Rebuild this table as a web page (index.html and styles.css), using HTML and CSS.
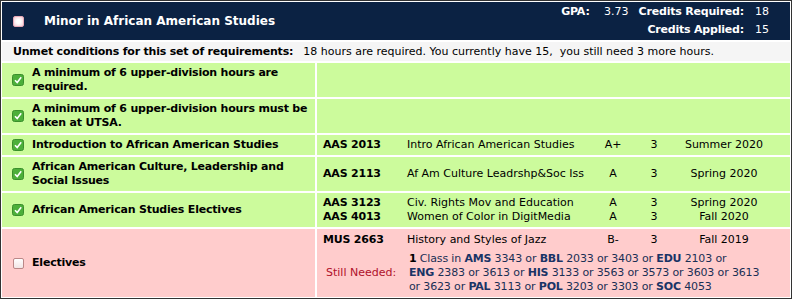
FILE: index.html
```html
<!DOCTYPE html>
<html>
<head>
<meta charset="utf-8">
<link rel="stylesheet" href="styles.css">
</head>
<body>
<div class="block">
  <div class="header">
    <div class="head-left">
      <span class="box box-head"></span>
      <span class="head-title">Minor in African American Studies</span>
    </div>
    <div class="head-right">
      <div class="stat-line">
        <span class="lbl">GPA:</span><span class="val gpa">3.73</span>
        <span class="lbl">Credits Required:</span><span class="val">18</span>
      </div>
      <div class="stat-line">
        <span class="lbl">Credits Applied:</span><span class="val">15</span>
      </div>
    </div>
  </div>

  <div class="unmet">
    <span class="unmet-lbl">Unmet conditions for this set of requirements:</span>
    <span class="unmet-txt">18 hours are required. You currently have 15,&nbsp; you still need 3 more hours.</span>
  </div>

  <div class="req ok">
    <div class="req-left">
      <svg class="chk" viewBox="0 0 12 12"><rect x="0.5" y="0.5" width="11" height="11" rx="2" fill="#4caf3a" stroke="#3a8f2c"/><path d="M3 6.2 L5.2 8.6 L9.2 3.2" fill="none" stroke="#fff" stroke-width="1.6"/></svg>
      <span class="req-name">A minimum of 6 upper-division hours are required.</span>
    </div>
    <div class="req-right"></div>
  </div>

  <div class="req ok">
    <div class="req-left">
      <svg class="chk" viewBox="0 0 12 12"><rect x="0.5" y="0.5" width="11" height="11" rx="2" fill="#4caf3a" stroke="#3a8f2c"/><path d="M3 6.2 L5.2 8.6 L9.2 3.2" fill="none" stroke="#fff" stroke-width="1.6"/></svg>
      <span class="req-name">A minimum of 6 upper-division hours must be taken at UTSA.</span>
    </div>
    <div class="req-right"></div>
  </div>

  <div class="req ok">
    <div class="req-left">
      <svg class="chk" viewBox="0 0 12 12"><rect x="0.5" y="0.5" width="11" height="11" rx="2" fill="#4caf3a" stroke="#3a8f2c"/><path d="M3 6.2 L5.2 8.6 L9.2 3.2" fill="none" stroke="#fff" stroke-width="1.6"/></svg>
      <span class="req-name">Introduction to African American Studies</span>
    </div>
    <div class="req-right">
      <div class="course"><span class="code">AAS 2013</span><span class="title">Intro African American Studies</span><span class="grade">A+</span><span class="cred">3</span><span class="term">Summer 2020</span></div>
    </div>
  </div>

  <div class="req ok">
    <div class="req-left">
      <svg class="chk" viewBox="0 0 12 12"><rect x="0.5" y="0.5" width="11" height="11" rx="2" fill="#4caf3a" stroke="#3a8f2c"/><path d="M3 6.2 L5.2 8.6 L9.2 3.2" fill="none" stroke="#fff" stroke-width="1.6"/></svg>
      <span class="req-name">African American Culture, Leadership and Social Issues</span>
    </div>
    <div class="req-right">
      <div class="course"><span class="code">AAS 2113</span><span class="title">Af Am Culture Leadrshp&amp;Soc Iss</span><span class="grade">A</span><span class="cred">3</span><span class="term">Spring 2020</span></div>
    </div>
  </div>

  <div class="req ok">
    <div class="req-left">
      <svg class="chk" viewBox="0 0 12 12"><rect x="0.5" y="0.5" width="11" height="11" rx="2" fill="#4caf3a" stroke="#3a8f2c"/><path d="M3 6.2 L5.2 8.6 L9.2 3.2" fill="none" stroke="#fff" stroke-width="1.6"/></svg>
      <span class="req-name">African American Studies Electives</span>
    </div>
    <div class="req-right">
      <div class="course"><span class="code">AAS 3123</span><span class="title">Civ. Rights Mov and Education</span><span class="grade">A</span><span class="cred">3</span><span class="term">Spring 2020</span></div>
      <div class="course"><span class="code">AAS 4013</span><span class="title">Women of Color in DigitMedia</span><span class="grade">A</span><span class="cred">3</span><span class="term">Fall 2020</span></div>
    </div>
  </div>

  <div class="req bad last">
    <div class="req-left">
      <span class="box box-row"></span>
      <span class="req-name">Electives</span>
    </div>
    <div class="req-right">
      <div class="course"><span class="code">MUS 2663</span><span class="title">History and Styles of Jazz</span><span class="grade">B-</span><span class="cred">3</span><span class="term">Fall 2019</span></div>
      <div class="needed">
        <span class="need-lbl">Still Needed:</span>
        <span class="need-txt"><b>1</b> Class in <b class="sub">AMS</b> <span class="num">3343</span> or <b class="sub">BBL</b> <span class="num">2033</span> or <span class="num">3403</span> or <b class="sub">EDU</b> <span class="num">2103</span> or<br><b class="sub">ENG</b> <span class="num">2383</span> or <span class="num">3613</span> or <b class="sub">HIS</b> <span class="num">3133</span> or <span class="num">3563</span> or <span class="num">3573</span> or <span class="num">3603</span> or <span class="num">3613</span><br>or <span class="num">3623</span> or <b class="sub">PAL</b> <span class="num">3113</span> or <b class="sub">POL</b> <span class="num">3203</span> or <span class="num">3303</span> or <b class="sub">SOC</b> <span class="num">4053</span></span>
      </div>
    </div>
  </div>
</div>
</body>
</html>
```

FILE: styles.css
```css
html, body {
  margin: 0;
  padding: 0;
  background: #fff;
}
body {
  font-family: "DejaVu Sans", Verdana, sans-serif;
  font-size: 11px;
  color: #000;
}
b, .lbl, .unmet-lbl, .req-name, .code {
  letter-spacing: -0.2px;
}
.block {
  width: 788px;
  height: 295px;
  border: 1px solid #333;
  padding: 1px;
  display: flex;
  flex-direction: column;
  gap: 2px;
  background: #fff;
  box-sizing: content-box;
}
.block > * {
  flex: none;
}
.block > .last {
  flex: 1;
}
.header {
  background: #0b2243;
  color: #fff;
  height: 38px;
  display: flex;
  justify-content: space-between;
  align-items: stretch;
}
.head-left {
  display: flex;
  align-items: center;
  padding-left: 11px;
}
.box {
  display: inline-block;
  width: 11px;
  height: 11px;
  box-sizing: border-box;
  border-radius: 2px;
}
.box-head {
  background: radial-gradient(circle, #fff 30%, #f3c9d2 100%);
  border: 1px solid #e6a9b8;
}
.box-row {
  background: linear-gradient(#fff, #f2e6e6);
  border: 1px solid #b88;
}
.head-title {
  font-weight: bold;
  font-size: 12px;
  margin-left: 20px;
}
.head-right {
  display: flex;
  flex-direction: column;
  justify-content: center;
  align-items: flex-end;
  padding-right: 21px;
  gap: 4px;
  line-height: 14px;
}
.stat-line {
  display: flex;
  align-items: baseline;
}
.lbl {
  font-weight: bold;
}
.val {
  width: 25px;
  text-align: right;
}
.val.gpa {
  width: 39px;
  margin-right: 10px;
}
.unmet {
  background: #f5f5f5;
  height: 19px;
  display: flex;
  align-items: center;
  padding-left: 11px;
}
.unmet-lbl {
  font-weight: bold;
  margin-right: 10px;
}
.req {
  display: flex;
  gap: 2px;
}
.req.ok > div { background: #ccfb9c; }
.req.bad > div { background: #ffcccc; }
.req-left {
  width: 313px;
  flex: none;
  display: flex;
  align-items: center;
  padding: 3px 0 3px 10px;
  box-sizing: border-box;
}
.chk {
  width: 12px;
  height: 12px;
  flex: none;
}
.req-left .box-row { flex: none; margin-left: 1px; }
.req-name {
  font-weight: bold;
  margin-left: 8px;
  line-height: 14px;
  padding-right: 2px;
}
.req-right {
  flex: 1;
  display: flex;
  flex-direction: column;
  justify-content: center;
  padding: 3px 0;
}
.course {
  display: grid;
  grid-template-columns: 84px 191px 30px 52px 88px;
  padding-left: 6px;
  line-height: 14px;
  white-space: nowrap;
}
.code { font-weight: bold; }
.grade, .cred, .term { text-align: center; }
.needed {
  display: flex;
  align-items: center;
  margin-top: 5px;
}
.need-lbl {
  color: #b0102a;
  width: 92px;
  flex: none;
  padding-left: 9px;
  box-sizing: border-box;
}
.need-txt {
  line-height: 14px;
  color: #1a2f55;
  white-space: nowrap;
  letter-spacing: -0.15px;
}
.need-txt b { color: #000; }
.need-txt .sub { color: #1a3466; }
```
